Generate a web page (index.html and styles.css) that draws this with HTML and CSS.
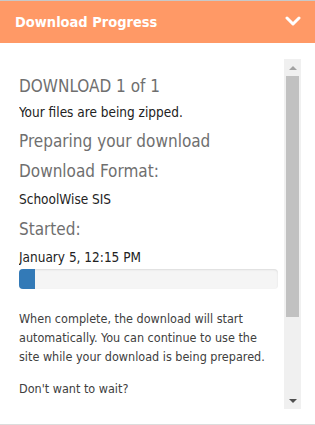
FILE: index.html
```html
<!DOCTYPE html>
<html>
<head>
<meta charset="utf-8">
<link rel="stylesheet" href="styles.css">
</head>
<body>
<div class="panel">
  <div class="header">
    <span class="title">Download Progress</span>
    <svg class="chev" width="16" height="10" viewBox="0 0 16 10"><path d="M2 2 L8 8 L14 2" fill="none" stroke="#fff" stroke-width="3" stroke-linecap="round" stroke-linejoin="round"/></svg>
  </div>
  <div class="body">
    <div class="scroll">
      <div class="content">
        <div class="h first">DOWNLOAD 1 of 1</div>
        <div class="t">Your files are being zipped.</div>
        <div class="h gap">Preparing your download</div>
        <div class="h">Download Format:</div>
        <div class="t">SchoolWise SIS</div>
        <div class="h gap2">Started:</div>
        <div class="t">January 5, 12:15 PM</div>
        <div class="progress"><div class="fill" style="width:16px"></div></div>
        <p class="para">When complete, the download will start automatically. You can continue to use the site while your download is being prepared.</p>
        <p class="para">Don't want to wait?</p>
      </div>
      <div class="sbar">
        <div class="arrow up"></div>
        <div class="track"><div class="thumb"></div></div>
        <div class="arrow down"></div>
      </div>
    </div>
  </div>
</div>
</body>
</html>
```
FILE: styles.css
```css
html, body { margin: 0; padding: 0; background: #fff; }
body { font-family: "DejaVu Sans Condensed", "DejaVu Sans", sans-serif; }
.panel { width: 315px; height: 425px; box-sizing: border-box; border-top: 1px solid #c8c8c8; border-bottom: 1px solid #dcdcdc; display: flex; flex-direction: column; }
.header { height: 42px; background: #ff9966; display: flex; align-items: center; justify-content: space-between; padding: 0 14px 0 15px; }
.title { color: #fff; font-weight: bold; font-size: 14.5px; }
.chev { display: block; margin-top: -3px; }
.body { flex: 1; padding: 16px 14px 16px 19px; min-height: 0; }
.scroll { display: flex; height: 350px; }
.content { flex: 1; overflow: hidden; padding: 10px 6px 0 0; }
.h { color: #6f6f6f; font-size: 17px; line-height: 30px; }
.h.first { padding-top: 4px; line-height: 26px; }
.h.gap { margin-top: 1px; }
.h.gap2 { margin-top: 2px; }
.t { color: #222; font-size: 13.5px; line-height: 26px; }
.progress { height: 20px; background: #f5f5f5; border-radius: 4px; box-shadow: inset 0 1px 2px rgba(0,0,0,0.1); margin-top: -1px; overflow: hidden; }
.fill { height: 100%; background: #337ab7; }
.para { color: #404040; font-size: 12.5px; line-height: 19px; margin: 20px 0 0 0; }
.para + .para { margin-top: 13px; }
.sbar { width: 17px; background: #f0f0f0; display: flex; flex-direction: column; }
.arrow { height: 17px; display: flex; align-items: center; justify-content: center; }
.arrow::before { content: ""; width: 0; height: 0; border-left: 4px solid transparent; border-right: 4px solid transparent; }
.up::before { border-bottom: 4px solid #a3a3a3; }
.down::before { border-top: 4px solid #505050; }
.track { flex: 1; padding: 0 2px; }
.thumb { height: 241px; background: #c1c1c1; }
```
